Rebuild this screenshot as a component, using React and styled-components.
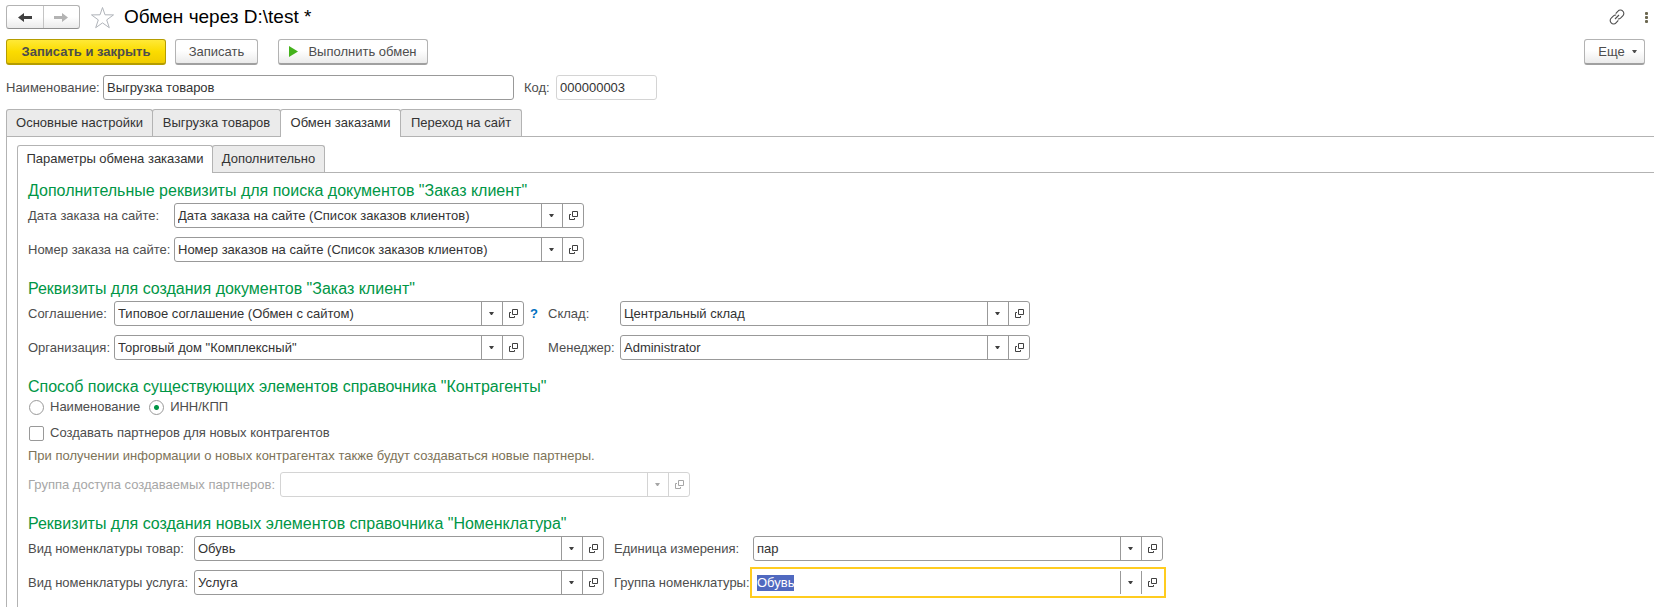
import React, { useEffect, useRef } from "react";
import styled, { createGlobalStyle, css } from "styled-components";

const GlobalStyle = createGlobalStyle`
  * {
    box-sizing: border-box;
  }

  body {
    margin: 0;
    background: #fff;
    color: #4d4d4d;
    font: 13px/16px "Liberation Sans", Arial, sans-serif;
  }

  button, input {
    font: inherit;
    color: inherit;
  }
`;

const Page = styled.main`
  display: flex;
  flex-direction: column;
  min-height: 100vh;
  padding: 5px 0 0 6px;
`;

const TitleBar = styled.header`
  display: flex;
  align-items: center;
  height: 24px;
  padding-right: 6px;
`;

const NavGroup = styled.div`
  display: flex;
  width: 74px;
  height: 24px;
  border: 1px solid #b3b3b3;
  border-bottom-color: #8f8f8f;
  border-radius: 3px;
  background: linear-gradient(#fff 50%, #ebebeb);
`;

const NavButton = styled.button`
  display: flex;
  flex: 1;
  align-items: center;
  justify-content: center;
  padding: 0;
  border: 0;
  background: none;
  color: ${(props) => (props.disabled ? "#b3b3b3" : "#404040")};

  & + & {
    border-left: 1px solid #c4c4c4;
  }
`;

const IconButton = styled.button`
  display: flex;
  padding: 0;
  border: 0;
  background: none;
`;

const Favorite = styled(IconButton)`
  margin: 0 9px 0 10px;
`;

const Title = styled.h1`
  flex: 1;
  margin: 0;
  color: #000;
  font-size: 19px;
  font-weight: 400;
  line-height: 24px;
`;

const TitleActions = styled.div`
  display: flex;
  align-items: center;
  gap: 20px;
`;

const Toolbar = styled.div`
  display: flex;
  margin-top: 10px;
  padding-right: 9px;
`;

const Button = styled.button`
  display: flex;
  align-items: center;
  justify-content: center;
  gap: 10px;
  height: 26px;
  min-width: ${(props) => props.$width}px;
  margin-right: ${(props) => props.$after || 0}px;
  padding: 0;
  border: 1px solid #b3b3b3;
  border-bottom: 2px solid #a0a0a0;
  border-radius: 3px;
  background: linear-gradient(#fff 45%, #ebebeb);

  ${(props) =>
    props.$primary &&
    css`
      border-color: #b59d00;
      background: linear-gradient(#ffe937, #fbdc00 50%, #f0cc00);
      font-weight: 700;
    `}
`;

const MoreButton = styled(Button)`
  gap: 7px;
  margin-left: auto;
  padding-left: 6px;
`;

const NameRow = styled.div`
  display: flex;
  align-items: center;
  gap: 3px;
  margin-top: 10px;
`;

const Label = styled.label`
  white-space: nowrap;
  color: ${(props) => (props.$muted ? "#a6a6a6" : "#4d4d4d")};
`;

const NameLabel = styled(Label)`
  min-width: ${(props) => props.$width}px;
`;

const TextInput = styled.input`
  width: ${(props) => props.$width}px;
  height: 25px;
  margin-right: 7px;
  padding: 0 3px;
  border: 1px solid ${(props) => (props.readOnly ? "#d4d4d4" : "#999")};
  border-radius: 3px;
  background: #fff;
  color: #333;
  outline: 0;
`;

const Tabs = styled.div`
  display: flex;
  height: 28px;
  border-bottom: 1px solid #b3b3b3;
`;

const MainTabs = styled(Tabs)`
  margin-top: 9px;
`;

const Tab = styled.button`
  min-width: ${(props) => props.$width}px;
  height: ${(props) => (props.$active ? 28 : 27)}px;
  padding: 0 0 ${(props) => (props.$active ? 2 : 1)}px;
  border: 1px solid #b3b3b3;
  border-bottom: 0;
  border-radius: 3px 3px 0 0;
  background: ${(props) => (props.$active ? "#fff" : "#ebebeb")};
  color: #333;

  & + & {
    margin-left: -1px;
  }
`;

const Panel = styled.div`
  display: flex;
  flex: 1;
  flex-direction: column;
  padding: 8px 0 0 10px;
  border-left: 1px solid #b3b3b3;
`;

const Form = styled.form`
  flex: 1;
  padding: 8px 0 4px 10px;
  border-left: 1px solid #b3b3b3;
`;

const Section = styled.section`
  & + & {
    margin-top: 17px;
  }
`;

const Heading = styled.h2`
  margin: 0;
  padding-bottom: 2px;
  color: #009646;
  font-size: 16px;
  font-weight: 400;
  line-height: 20px;
`;

const Fields = styled.div`
  display: grid;
  grid-template-columns: ${(props) => props.$columns};
  align-items: center;
  row-gap: 9px;
`;

const Combo = styled.div`
  display: flex;
  width: 410px;
  height: 25px;
  border: 1px solid #999;
  border-radius: 3px;
  color: #404040;

  ${(props) =>
    props.$muted &&
    css`
      border-color: #d4d4d4;
      color: #a6a6a6;
    `}

  ${(props) =>
    props.$focused &&
    css`
      border-color: transparent;
      border-radius: 0;
      outline: 2px solid #ffcc1f;
      outline-offset: 1px;
    `}
`;

const ComboInput = styled.input`
  flex: 1;
  min-width: 0;
  padding: 0 3px;
  border: 0;
  background: none;
  color: #333;
  outline: 0;

  &::selection {
    background: #5069c0;
    color: #fff;
  }
`;

const ComboButton = styled.button`
  display: flex;
  align-items: center;
  justify-content: center;
  width: 21px;
  padding: 0 1px 1px 0;
  border: 0;
  border-left: 1px solid ${(props) => (props.disabled ? "#d4d4d4" : "#999")};
  background: none;
`;

const OpenButton = styled(ComboButton)`
  padding: 0 0 1px;
`;

const Help = styled.button`
  justify-self: start;
  width: 20px;
  padding: 0;
  border: 0;
  background: none;
  color: #0070c0;
  font-weight: 700;
`;

const Options = styled.div`
  display: flex;
  gap: 9px;
  padding-left: 1px;
`;

const Option = styled.label`
  display: flex;
  align-items: center;
  gap: 6px;
  height: 16px;
`;

const Radio = styled.input`
  appearance: none;
  width: 15px;
  height: 15px;
  margin: 0;
  border: 1px solid #999;
  border-radius: 50%;

  &:checked {
    background: radial-gradient(circle, #009646 2px, #fff 3px);
  }
`;

const Checkbox = styled.input`
  appearance: none;
  width: 15px;
  height: 15px;
  margin: 0;
  border: 1px solid #999;
  border-radius: 2px;
`;

const PartnerOption = styled(Option)`
  margin-top: 10px;
  padding-left: 1px;
`;

const Hint = styled.p`
  margin: 7px 0 8px;
  color: #7d7358;
`;

const Arrow = ({ flip }) => (
  <svg width="14" height="9" viewBox="0 0 14 9">
    <path
      d={flip ? "M0 3h8V0l6 4.5L8 9V6H0z" : "M14 3H6V0L0 4.5 6 9V6h8z"}
      fill="currentColor"
    />
  </svg>
);

const Star = () => (
  <svg width="25" height="24" viewBox="0 0 25 24">
    <path
      d="M12.5 2.5l2.5 7.3 8.5.1-6.8 5 2.6 7.8-6.8-4.8-6.8 4.8 2.6-7.8-6.8-5 8.5-.1z"
      fill="none"
      stroke="#b0b4ba"
    />
  </svg>
);

const LinkIcon = () => (
  <svg width="16" height="16" viewBox="0 0 16 16" fill="none" stroke="#4d4d4d" strokeWidth="1.1">
    <path d="M6.7 4.6L9 2.2a3.1 3.1 0 0 1 4.8 0 3.1 3.1 0 0 1 0 4.6l-2.3 2.3a3.1 3.1 0 0 1-2.6.8" />
    <path d="M9.3 11.4L7 13.8a3.1 3.1 0 0 1-4.8 0 3.1 3.1 0 0 1 0-4.6l2.3-2.3a3.1 3.1 0 0 1 2.6-.8" />
    <path d="M6 10l4-4" />
  </svg>
);

const Dots = () => (
  <svg width="3" height="11" viewBox="0 0 3 11" fill="#6b674f">
    <rect width="3" height="3" rx="1" />
    <rect y="4" width="3" height="3" rx="1" />
    <rect y="8" width="3" height="3" rx="1" />
  </svg>
);

const Play = () => (
  <svg width="9" height="11" viewBox="0 0 9 11">
    <path d="M0 0l9 5.5L0 11z" fill="#44b21c" />
  </svg>
);

const Caret = () => (
  <svg width="5" height="3" viewBox="0 0 5 3">
    <path d="M0 0h5L3 3H2z" fill="currentColor" />
  </svg>
);

const OpenIcon = () => (
  <svg width="9" height="9" viewBox="0 0 9 9" fill="none" stroke="currentColor">
    <path d="M3.5.5h5v5h-5zM2 3.5H.5v5h5V7" />
  </svg>
);

const Field = ({ id, label, value, disabled, focused }) => {
  const input = useRef(null);

  useEffect(() => {
    if (focused) {
      input.current.focus();
      input.current.select();
    }
  }, [focused]);

  return (
    <>
      <Label htmlFor={id} $muted={disabled}>{label}:</Label>
      <Combo $muted={disabled} $focused={focused}>
        <ComboInput id={id} ref={input} defaultValue={value} disabled={disabled} />
        <ComboButton type="button" aria-label="Выбрать" disabled={disabled}>
          <Caret />
        </ComboButton>
        <OpenButton type="button" aria-label="Открыть" disabled={disabled}>
          <OpenIcon />
        </OpenButton>
      </Combo>
    </>
  );
};

const App = () => {
  return (
    <Page>
      <GlobalStyle />
      <TitleBar>
        <NavGroup>
          <NavButton aria-label="Назад"><Arrow /></NavButton>
          <NavButton aria-label="Вперед" disabled><Arrow flip /></NavButton>
        </NavGroup>
        <Favorite aria-label="В избранное"><Star /></Favorite>
        <Title>Обмен через D:\test *</Title>
        <TitleActions>
          <IconButton aria-label="Ссылка"><LinkIcon /></IconButton>
          <IconButton aria-label="Меню"><Dots /></IconButton>
        </TitleActions>
      </TitleBar>

      <Toolbar>
        <Button $primary $width={160} $after={9}>Записать и закрыть</Button>
        <Button $width={83} $after={20}>Записать</Button>
        <Button $width={150}><Play />Выполнить обмен</Button>
        <MoreButton $width={61}>Еще<Caret /></MoreButton>
      </Toolbar>

      <NameRow>
        <NameLabel htmlFor="name" $width={94}>Наименование:</NameLabel>
        <TextInput id="name" $width={411} defaultValue="Выгрузка товаров" />
        <NameLabel htmlFor="code" $width={29}>Код:</NameLabel>
        <TextInput id="code" $width={101} defaultValue="000000003" readOnly />
      </NameRow>

      <MainTabs role="tablist">
        <Tab role="tab" $width={147}>Основные настройки</Tab>
        <Tab role="tab" $width={129}>Выгрузка товаров</Tab>
        <Tab role="tab" aria-selected $active $width={121}>Обмен заказами</Tab>
        <Tab role="tab" $width={122}>Переход на сайт</Tab>
      </MainTabs>

      <Panel>
        <Tabs role="tablist">
          <Tab role="tab" aria-selected $active $width={196}>Параметры обмена заказами</Tab>
          <Tab role="tab" $width={113}>Дополнительно</Tab>
        </Tabs>

        <Form>
          <Section>
            <Heading>Дополнительные реквизиты для поиска документов "Заказ клиент"</Heading>
            <Fields $columns="146px 410px">
              <Field id="date" label="Дата заказа на сайте" value="Дата заказа на сайте (Список заказов клиентов)" />
              <Field id="number" label="Номер заказа на сайте" value="Номер заказов на сайте (Список заказов клиентов)" />
            </Fields>
          </Section>

          <Section>
            <Heading>Реквизиты для создания документов "Заказ клиент"</Heading>
            <Fields $columns="86px 410px 24px 72px 410px">
              <Field id="agreement" label="Соглашение" value="Типовое соглашение (Обмен с сайтом)" />
              <Help type="button">?</Help>
              <Field id="warehouse" label="Склад" value="Центральный склад" />
              <Field id="company" label="Организация" value={'Торговый дом "Комплексный"'} />
              <span />
              <Field id="manager" label="Менеджер" value="Administrator" />
            </Fields>
          </Section>

          <Section>
            <Heading>Способ поиска существующих элементов справочника "Контрагенты"</Heading>
            <Options>
              <Option><Radio type="radio" name="search" />Наименование</Option>
              <Option><Radio type="radio" name="search" defaultChecked />ИНН/КПП</Option>
            </Options>
            <PartnerOption><Checkbox type="checkbox" />Создавать партнеров для новых контрагентов</PartnerOption>
            <Hint>При получении информации о новых контрагентах также будут создаваться новые партнеры.</Hint>
            <Fields $columns="252px 410px">
              <Field id="access" label="Группа доступа создаваемых партнеров" value="" disabled />
            </Fields>
          </Section>

          <Section>
            <Heading>Реквизиты для создания новых элементов справочника "Номенклатура"</Heading>
            <Fields $columns="166px 420px 139px 410px">
              <Field id="goods" label="Вид номенклатуры товар" value="Обувь" />
              <Field id="unit" label="Единица измерения" value="пар" />
              <Field id="service" label="Вид номенклатуры услуга" value="Услуга" />
              <Field id="group" label="Группа номенклатуры" value="Обувь" focused />
            </Fields>
          </Section>
        </Form>
      </Panel>
    </Page>
  );
};

export default App;
